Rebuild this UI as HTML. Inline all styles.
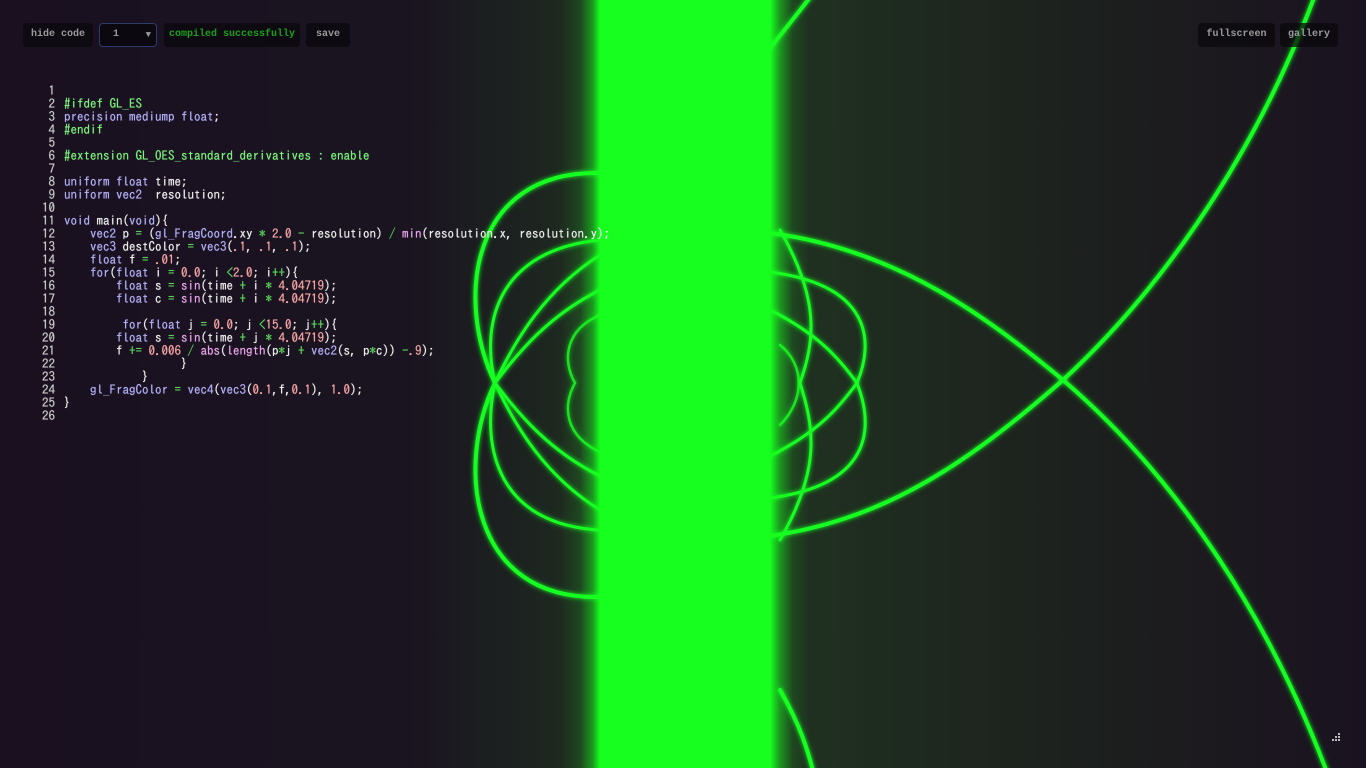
<!DOCTYPE html>
<html><head><meta charset="utf-8"><style>
html,body{margin:0;padding:0;width:1366px;height:768px;overflow:hidden;background:#1a1220;}
#bg{position:absolute;left:0;top:0}
.btn{position:absolute;top:23px;height:24px;background:rgba(10,8,12,0.75);border-radius:4px;color:#9a9a9a;font:bold 10px "Liberation Mono","IPAGothic",monospace;line-height:24px;text-align:center;}
#code{position:absolute;left:0;top:84px;font:13px "IPAGothic","Liberation Mono",monospace;line-height:13px;color:#ececec;white-space:pre;text-shadow:0 0 0.6px currentColor;}
.ln{display:inline-block;width:55px;text-align:right;color:#c8c8c8;margin-right:9px}
.k{color:#b0aef4}.p{color:#7cf07c}.n{color:#f4a4a4}.o{color:#5cd65c}.f{color:#e8a4e8}
</style></head><body>
<svg id="bg" width="1366" height="768" viewBox="0 0 1366 768">
<defs>
<linearGradient id="g1" x1="0" x2="1" y1="0" y2="0">
<stop offset="0" stop-color="#1a1020"/><stop offset="0.3" stop-color="#1a1420"/><stop offset="0.4" stop-color="#1d2620"/><stop offset="0.43" stop-color="#1f3020"/><stop offset="0.6" stop-color="#1f3020"/><stop offset="0.66" stop-color="#1e2a1f"/><stop offset="0.85" stop-color="#1c1c1e"/><stop offset="1" stop-color="#1a1220"/>
</linearGradient>
<linearGradient id="band" x1="560" x2="810" y1="0" y2="0" gradientUnits="userSpaceOnUse">
<stop offset="0" stop-color="#16ff1e" stop-opacity="0"/>
<stop offset="0.08" stop-color="#16ff1e" stop-opacity="0.12"/>
<stop offset="0.13" stop-color="#16ff1e" stop-opacity="0.5"/>
<stop offset="0.16" stop-color="#16ff1e" stop-opacity="1"/>
<stop offset="0.84" stop-color="#16ff1e" stop-opacity="1"/>
<stop offset="0.88" stop-color="#16ff1e" stop-opacity="0.5"/>
<stop offset="0.93" stop-color="#16ff1e" stop-opacity="0.12"/>
<stop offset="1" stop-color="#16ff1e" stop-opacity="0"/>
</linearGradient>
<filter id="glow" x="-20%" y="-20%" width="140%" height="140%"><feGaussianBlur stdDeviation="2.5" result="b"/><feMerge><feMergeNode in="b"/><feMergeNode in="SourceGraphic"/></feMerge></filter>
</defs>
<rect width="1366" height="768" fill="url(#g1)"/>
<g fill="none" stroke="#18ff20" filter="url(#glow)" stroke-linecap="round">
<g stroke-width="4">
<path d="M600,173 C470,170 455,300 495,383 C455,466 470,600 600,597"/>
<path d="M1315,-5 C1250,170 1150,300 1063,380 C960,470 880,520 770,536"/>
<path d="M770,233 C900,250 990,320 1063,380 C1180,480 1270,620 1328,775"/>
<path d="M760,60 C785,30 800,10 812,-5"/>
<path d="M780,690 C800,725 808,750 814,775"/>
</g>
<g stroke-width="3">
<path d="M600,240 C500,250 480,320 495,383 C480,450 500,525 600,530"/>
<path d="M600,255 C545,290 515,340 495,383 C515,426 545,476 600,510"/>
<path d="M600,290 C550,315 520,350 495,383 C520,416 550,451 600,476"/>
<path d="M770,272 C870,285 875,340 857,383 C875,430 870,485 770,498"/>
<path d="M770,310 C820,335 840,360 857,383 C840,406 820,431 770,456"/>
<path d="M780,230 C820,300 815,340 800,383 C815,430 820,470 780,540"/>
</g>
<g stroke-width="2.5" opacity="0.8">
<path d="M600,315 C565,330 562,360 575,383 C562,406 565,436 600,452"/>
<path d="M780,345 C805,365 805,400 780,425"/>
</g>
</g>
<rect x="560" y="0" width="250" height="768" fill="url(#band)"/>
<g fill="#bbb"><rect x="1338" y="733" width="2" height="2"/><rect x="1335" y="736" width="2" height="2"/><rect x="1338" y="736" width="2" height="2"/><rect x="1332" y="739" width="2" height="2"/><rect x="1335" y="739" width="2" height="2"/><rect x="1338" y="739" width="2" height="2"/></g>
</svg>
<div class="btn" style="left:23px;width:70px">hide code</div>
<div class="btn" style="left:99px;width:56px;height:22px;border:1px solid #2c3c6c;line-height:22px;text-align:left;background:rgba(8,6,12,0.8)"><span style="margin-left:13px">1</span><span style="position:absolute;right:5px;font-size:9px">▼</span></div>
<div class="btn" style="left:164px;width:136px;color:#1aa01a">compiled successfully</div>
<div class="btn" style="left:306px;width:44px">save</div>
<div class="btn" style="left:1198px;width:77px">fullscreen</div>
<div class="btn" style="left:1280px;width:58px">gallery</div>
<div id="code"><span class="ln">1</span>
<span class="ln">2</span><span class="p">#ifdef GL_ES</span>
<span class="ln">3</span><span class="k">precision mediump float</span>;
<span class="ln">4</span><span class="p">#endif</span>
<span class="ln">5</span>
<span class="ln">6</span><span class="p">#extension GL_OES_standard_derivatives : enable</span>
<span class="ln">7</span>
<span class="ln">8</span><span class="k">uniform float</span> time;
<span class="ln">9</span><span class="k">uniform vec2</span>  resolution;
<span class="ln">10</span>
<span class="ln">11</span><span class="k">void</span> main(<span class="k">void</span>){
<span class="ln">12</span>    <span class="k">vec2</span> p <span class="o">=</span> (<span class="k">gl_FragCoord</span>.xy <span class="o">*</span> <span class="n">2.0</span> <span class="o">-</span> resolution) <span class="o">/</span> <span class="f">min</span>(resolution.x, resolution.y);
<span class="ln">13</span>    <span class="k">vec3</span> destColor <span class="o">=</span> <span class="k">vec3</span>(<span class="n">.1</span>, <span class="n">.1</span>, <span class="n">.1</span>);
<span class="ln">14</span>    <span class="k">float</span> f <span class="o">=</span> <span class="n">.01</span>;
<span class="ln">15</span>    <span class="k">for</span>(<span class="k">float</span> i <span class="o">=</span> <span class="n">0.0</span>; i <span class="o">&lt;</span><span class="n">2.0</span>; i<span class="o">++</span>){
<span class="ln">16</span>        <span class="k">float</span> s <span class="o">=</span> <span class="f">sin</span>(time <span class="o">+</span> i <span class="o">*</span> <span class="n">4.04719</span>);
<span class="ln">17</span>        <span class="k">float</span> c <span class="o">=</span> <span class="f">sin</span>(time <span class="o">+</span> i <span class="o">*</span> <span class="n">4.04719</span>);
<span class="ln">18</span>
<span class="ln">19</span>         <span class="k">for</span>(<span class="k">float</span> j <span class="o">=</span> <span class="n">0.0</span>; j <span class="o">&lt;</span><span class="n">15.0</span>; j<span class="o">++</span>){
<span class="ln">20</span>        <span class="k">float</span> s <span class="o">=</span> <span class="f">sin</span>(time <span class="o">+</span> j <span class="o">*</span> <span class="n">4.04719</span>);
<span class="ln">21</span>        f <span class="o">+=</span> <span class="n">0.006</span> <span class="o">/</span> <span class="f">abs</span>(<span class="f">length</span>(p<span class="o">*</span>j <span class="o">+</span> <span class="k">vec2</span>(s, p<span class="o">*</span>c)) <span class="o">-</span><span class="n">.9</span>);
<span class="ln">22</span>                  }
<span class="ln">23</span>            }
<span class="ln">24</span>    <span class="k">gl_FragColor</span> <span class="o">=</span> <span class="k">vec4</span>(<span class="k">vec3</span>(<span class="n">0.1</span>,f,<span class="n">0.1</span>), <span class="n">1.0</span>);
<span class="ln">25</span>}
<span class="ln">26</span></div>
</body></html>
